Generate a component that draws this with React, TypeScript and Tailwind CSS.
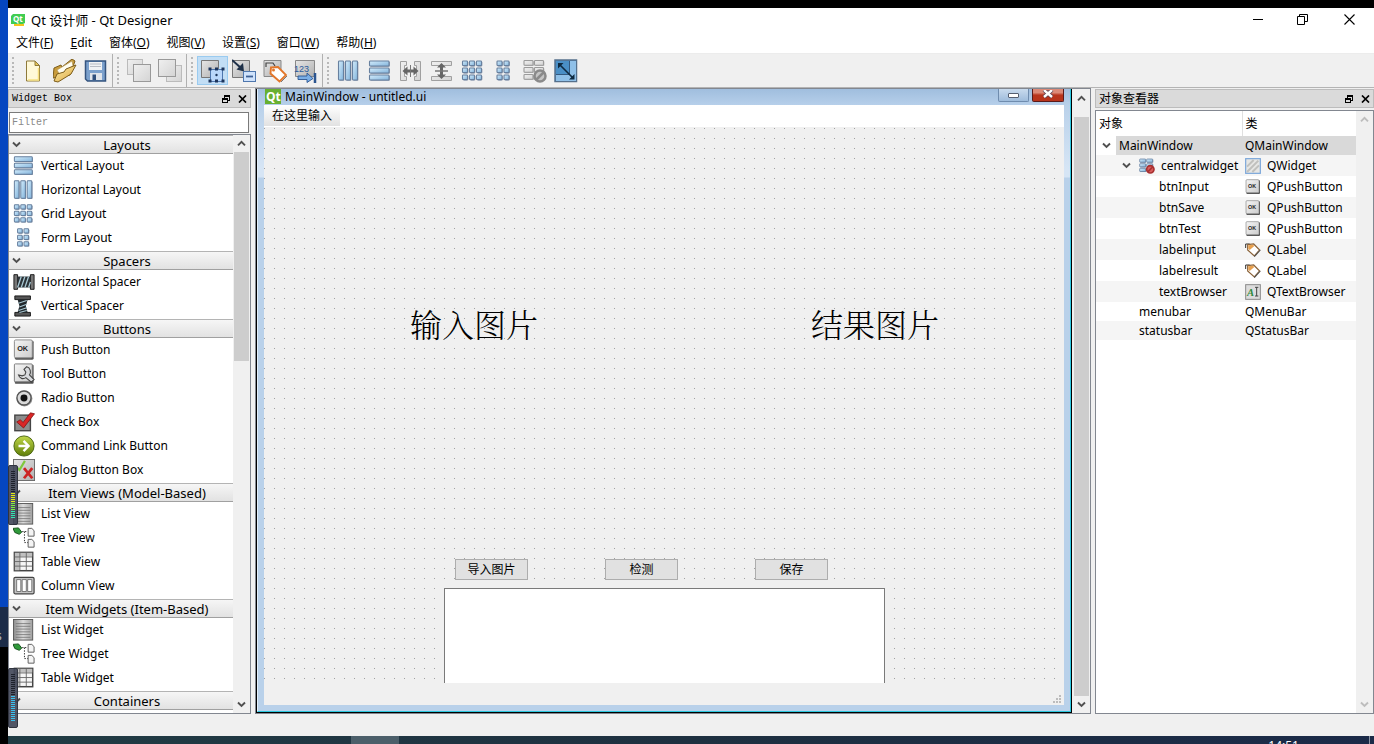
import React from "react";

type IconProps = { size?: number; children: React.ReactNode };

function Icon({ size = 24, children }: IconProps) {
  return (
    <svg width={size} height={size} viewBox="0 0 24 24" aria-hidden="true" className="block shrink-0">
      {children}
    </svg>
  );
}

function Defs() {
  return (
    <svg width="0" height="0" className="absolute" aria-hidden="true">
      <defs>
        <linearGradient id="blue" x1="0" y1="0" x2="1" y2="1">
          <stop offset="0" stopColor="#d3ecfb" />
          <stop offset="1" stopColor="#83b4dc" />
        </linearGradient>
        <linearGradient id="gray" x1="0" y1="0" x2="1" y2="1">
          <stop offset="0" stopColor="#e6e6e6" />
          <stop offset="1" stopColor="#b0b0b0" />
        </linearGradient>
        <linearGradient id="button" x1="0" y1="0" x2="1" y2="1">
          <stop offset="0" stopColor="#f6f6f6" />
          <stop offset="1" stopColor="#cccccc" />
        </linearGradient>
        <linearGradient id="dim" x1="0" y1="0" x2="1" y2="1">
          <stop offset="0" stopColor="#f0f0f0" />
          <stop offset="1" stopColor="#d4d4d4" />
        </linearGradient>
        <linearGradient id="gold" x1="0" y1="0" x2="1" y2="1">
          <stop offset="0" stopColor="#fdf0b0" />
          <stop offset="1" stopColor="#dca53a" />
        </linearGradient>
        <linearGradient id="green" x1="0" y1="0" x2="0" y2="1">
          <stop offset="0" stopColor="#c2d84a" />
          <stop offset="1" stopColor="#5e7d08" />
        </linearGradient>
        <linearGradient id="list" x1="0" y1="0" x2="1" y2="0">
          <stop offset="0" stopColor="#8c8c8c" />
          <stop offset="0.5" stopColor="#dcdcdc" />
          <stop offset="1" stopColor="#a0a0a0" />
        </linearGradient>
      </defs>
    </svg>
  );
}

function Cell({ x, y, w, h, dim }: { x: number; y: number; w: number; h: number; dim?: boolean }) {
  return (
    <g>
      <rect x={x + 0.8} y={y + 0.8} width={w} height={h} rx="0.800" fill={dim ? "#b8b8b8" : "#8592a8"} />
      <rect x={x} y={y} width={w} height={h} rx="0.800" fill={dim ? "url(#dim)" : "url(#blue)"} stroke={dim ? "#9b9b9b" : "#67809f"} strokeWidth="1.100" />
    </g>
  );
}

const HLayout = () => (
  <>
    {[1.5, 8.5, 15.5].map((x) => (
      <Cell key={x} x={x} y={2} w={5} h={19} />
    ))}
  </>
);
const VLayout = () => (
  <>
    {[2, 9, 16].map((y) => (
      <Cell key={y} x={1.5} y={y} w={19.5} h={5} />
    ))}
  </>
);
const GridLayout = () => (
  <>
    {[2, 9, 16].map((y) => [1.5, 8.5, 15.5].map((x) => <Cell key={x + y * 50} x={x} y={y} w={5} h={4.6} />))}
  </>
);
const FormLayout = () => (
  <>
    {[2, 9, 16].map((y) => [5, 12].map((x) => <Cell key={x + y * 50} x={x} y={y} w={5} h={4.6} />))}
  </>
);
const HSplit = () => (
  <>
    <path d="M1.500 2.500h6v4h-2v11h2v4h-6zM21.500 2.500h-6v4h2v11h-2v4h6z" fill="url(#dim)" stroke="#a0a0a0" />
    <path d="M3.500 12l5-4.500v3h6v-3l5 4.500-5 4.500v-3h-6v3z" fill="#666" />
    <path d="M11.500 6v12" stroke="#777" />
  </>
);
const VSplit = () => (
  <>
    <path d="M1.500 2.500h20v4h-20zM1.500 17.500h20v4h-20z" fill="url(#dim)" stroke="#a0a0a0" />
    <path d="M11.500 4l4.500 4.500h-3v7h3L11.500 20l-4.500-4.500h3v-7H7z" fill="#666" />
    <path d="M5 12h13" stroke="#777" strokeWidth="1.500" />
  </>
);
const BreakLayout = ({ color }: { color?: boolean }) => (
  <>
    {[1.5, 8.5, 15.5].map((y) => [1, 11.5].map((x) => <Cell key={x + y * 50} x={x} y={y} w={9} h={4.8} dim={!color} />))}
    <circle cx="17" cy="17" r="5.500" fill={color ? "#d85c5c" : "#c4c4c4"} stroke={color ? "#a83030" : "#8a8a8a"} strokeWidth="2.500" />
    <path d="M13.500 20.500l7-7" stroke={color ? "#a83030" : "#8a8a8a"} strokeWidth="2.500" />
  </>
);
const AdjustSize = () => (
  <>
    <rect x="1" y="1" width="21.500" height="21.500" fill="#4f86b8" stroke="#55708c" strokeWidth="1.500" />
    <path d="M2 2h13v13H2z" fill="#4a8fc6" />
    <path d="M15.500 2H22v20H2v-6.500h13.500z" fill="#8fc0e8" />
    <path d="M2 15.500h13.500V2" fill="none" stroke="#33597f" />
    <path d="M6 6l13 13" stroke="#0f2a40" strokeWidth="1.600" />
    <path d="M4 4h5.500L4 9.500zM20.500 20.500H15l5.500-5.500z" fill="#0f2a40" />
  </>
);
const NewFile = () => (
  <>
    <path d="M4.500 2H13l4.500 4.500V22h-13z" fill="#fff9d8" stroke="#8f7a3a" />
    <path d="M13 2v4.500h4.500z" fill="#e8c95a" stroke="#8f7a3a" />
    <path d="M6 21h10.500V9" fill="none" stroke="#f5df80" strokeWidth="1.500" />
  </>
);
const OpenFile = () => (
  <>
    <path d="M0 19L1 9l7-3 1 2L19 0l3 2-5 14z" fill="#c99c3c" stroke="#7d5d1a" />
    <path d="M4 11L19 2l1 5-13 9z" fill="#fffdf0" stroke="#b49a5a" strokeWidth="0.700" />
    <path d="M1 22l3-7 7-2 2-3 10-4-5 9L5 23z" fill="url(#gold)" stroke="#7d5d1a" />
  </>
);
const SaveFile = () => (
  <>
    <path d="M1.500 2h20v20H3.500l-2-2z" fill="#7ba0cc" stroke="#35547f" strokeWidth="1.500" />
    <path d="M5 3h13v8H5z" fill="#f0f2f4" />
    <path d="M6 5h11M6 7.500h11" stroke="#b8bcc4" />
    <path d="M6 14h12v7H6z" fill="#e0e4ea" />
    <path d="M8.500 15.500h3.500v5.500H8.500z" fill="#2f4f7c" />
  </>
);
const BringFront = () => (
  <>
    <rect x="0.500" y="0.500" width="15" height="15" fill="url(#dim)" stroke="#bbb" />
    <rect x="6.500" y="5.500" width="17" height="17" fill="url(#dim)" stroke="#999" />
  </>
);
const SendBack = () => (
  <>
    <rect x="8.500" y="6.500" width="15" height="16" fill="url(#dim)" stroke="#bbb" />
    <rect x="0.500" y="0.500" width="17" height="17" fill="url(#dim)" stroke="#999" />
  </>
);
const EditWidgets = () => (
  <>
    <path d="M.5 1.500h17v17H.5z" fill="url(#gray)" stroke="#777" />
    <rect x="9.500" y="10.500" width="12" height="12" fill="#b9d7fb" stroke="#4e76ad" />
    {[9, 15.5, 22].map((x) => [10, 22].map((y) => <rect key={x + y * 50} x={x - 1.5} y={y - 1.5} width="3" height="3" fill="#1c355c" />))}
    <circle cx="15.500" cy="16" r="1.200" fill="#1c355c" />
  </>
);
const EditSignals = () => (
  <>
    <path d="M.5 1.500h17v17H.5z" fill="url(#gray)" stroke="#777" />
    <path d="M0 1l9 8" stroke="#1e3048" strokeWidth="2" />
    <path d="M12 12.500l-1-8.500-6.500 6.500z" fill="#1e3048" />
    <rect x="11.500" y="12.500" width="12" height="10" fill="#cfe2fb" stroke="#4e76ad" />
    <path d="M14 17.500h7" stroke="#3c5f94" strokeWidth="1.800" />
  </>
);
const EditBuddies = () => (
  <>
    <path d="M1 1.500h17v16H1z" fill="url(#gray)" stroke="#888" />
    <path d="M3 8V4h7l2 3" fill="none" stroke="#444" strokeWidth="1.200" />
    <path d="M8 8.500l7-.5 8 8-6.500 6.500L7.500 14.500z" fill="#fff" stroke="#e2762a" strokeWidth="1.900" />
    <circle cx="10.500" cy="11" r="1.500" fill="#e2762a" />
    <path d="M18 23l6-6" stroke="#777" />
  </>
);
const EditTabs = () => (
  <>
    <path d="M1.500 1.500h19v16h-19z" fill="url(#gray)" stroke="#888" />
    <text x="0" y="13" fontSize="9" fontFamily="Liberation Sans, sans-serif" fill="#2a5a9c">123</text>
    <path d="M4 17h9v-3l6 5.500-6 4v-3H4z" fill="#79aee6" stroke="#2b5590" strokeWidth="0.900" />
    <path d="M21 14v10" stroke="#2b5590" strokeWidth="2.500" />
  </>
);
const HSpacer = () => (
  <>
    <path d="M1 4h4v16H1zM19 4h4v16h-4z" fill="#777" stroke="#111" />
    <path d="M5 6h14v12H5z" fill="#2c3338" />
    <path d="M5 18l4-12M9 18l4-12M13 18l4-12M17 18l2-6" stroke="#a9c9d4" strokeWidth="1.400" />
  </>
);
const VSpacer = () => (
  <>
    <path d="M2 1h17v4H2zM2 19h17v4H2z" fill="#555" stroke="#111" />
    <path d="M5 5h11l-2 7 2 7H5l2-7z" fill="#22282c" />
    <path d="M6 9l9-3M7 13l8-3M6 17l9-3M7 19l8-2" stroke="#a9c9d4" strokeWidth="1.200" />
  </>
);
const PushIcon = () => (
  <>
    <rect x="2" y="2" width="20.500" height="20.500" rx="1.500" fill="#555" />
    <rect x="1.500" y="1" width="19.500" height="19.500" rx="1.500" fill="url(#button)" stroke="#888" />
    <text x="4.500" y="13" fontSize="8" fontWeight="bold" fontFamily="Liberation Sans, sans-serif" fill="#222">OK</text>
  </>
);
const ToolIcon = () => (
  <>
    <rect x="2" y="2" width="20.500" height="20.500" rx="1" fill="#555" />
    <rect x="1.500" y="1" width="19.500" height="19.500" rx="1" fill="url(#button)" stroke="#777" />
    <path d="M15 4c4 1 5 6 3 9l5 5-3 3-6-5c-3 2-7 1-8-3l4 1 3-1 1-3-2-3z" fill="#d8dadd" stroke="#444" strokeWidth="1.200" />
  </>
);
const RadioIcon = () => (
  <>
    <circle cx="12.500" cy="12.500" r="8.700" fill="#999" />
    <circle cx="12" cy="12" r="7.700" fill="#dadada" stroke="#555" strokeWidth="1.500" />
    <circle cx="12" cy="12" r="3.800" fill="#111" />
  </>
);
const CheckIcon = () => (
  <>
    <rect x="2" y="4.500" width="17" height="17" fill="#8c8c8c" stroke="#444" strokeWidth="1.500" />
    <path d="M4 12l4-2.500 3 3L19 2l4.500 1L11.500 18.500z" fill="#d92626" stroke="#7a0e0e" strokeWidth="0.800" />
  </>
);
const CommandIcon = () => (
  <>
    <circle cx="12" cy="12" r="11" fill="url(#green)" stroke="#45600a" />
    <path d="M6 12h11M11.500 6.500l5.500 5.500-5.500 5.500" fill="none" stroke="#fff" strokeWidth="2.600" />
  </>
);
const DialogIcon = () => (
  <>
    <rect x="0.500" y="0.500" width="23" height="23" fill="url(#gray)" stroke="#666" />
    <path d="M4 9l3 3 6-10" fill="none" stroke="#7fc93c" strokeWidth="2.400" />
    <path d="M12 10l9 11M21 10l-9 11" stroke="#cc2222" strokeWidth="3" />
  </>
);
const ListIcon = () => (
  <>
    <rect x="0.500" y="0.500" width="21" height="22.500" fill="url(#list)" stroke="#555" />
    <path d="M3 5h16M3 8h16M3 11h16M3 14h16M3 17h16M3 20h16" stroke="#777" strokeWidth="0.900" />
  </>
);
const TreeIcon = () => (
  <>
    <path d="M0 1.500l6-.5 3.500 4.500L7 8 2 6z" fill="#2f9a3a" stroke="#124d18" />
    <path d="M10 5h5M12.500 5v12h4" fill="none" stroke="#222" strokeDasharray="1.500 1.500" />
    <path d="M16.500 1.500h4l2.500 2.500v6h-6.500zM16.500 13.500h4l2.500 2.500v6h-6.500z" fill="#f4f4f4" stroke="#555" />
  </>
);
const TableIcon = () => (
  <>
    <rect x="1.500" y="1.500" width="20" height="20" fill="#f6f6f6" stroke="#444" strokeWidth="1.600" />
    <path d="M2 2h5v19H2zM2 2h19v4H2z" fill="#c0c0c0" />
    <path d="M7.500 2v19M14.500 2v19M2 6.500h19M2 11.500h19M2 16.500h19" stroke="#666" />
  </>
);
const ColumnIcon = () => (
  <>
    <rect x="1" y="2.500" width="22" height="18" rx="1.500" fill="#c4c4c4" stroke="#444" strokeWidth="1.300" />
    <path d="M4 5h4.500v13H4zM10 5h4.500v13H10zM16 5h4.500v13H16z" fill="#fff" stroke="#555" strokeWidth="0.800" />
  </>
);
const WidgetIcon = () => (
  <>
    <rect x="1" y="1" width="22" height="22" fill="#e6e6e4" stroke="#7ba7da" strokeWidth="1.800" />
    <path d="M3 13L13 3M3 21L20 4M11 21l10-10" stroke="#c0c0bd" strokeWidth="3" />
  </>
);
const LabelIcon = () => (
  <>
    <path d="M1 9V3h6" fill="none" stroke="#333" strokeWidth="1.500" />
    <path d="M4 4l9-1 9 9-8 9L4 12z" fill="#fff" stroke="#8a6238" strokeWidth="1.800" />
    <path d="M5 5l7-1 2 2-7 6-2-2z" fill="#e8a04e" />
    <path d="M14 22l9-10" stroke="#555" strokeWidth="1.600" />
  </>
);
const TextIcon = () => (
  <>
    <rect x="1" y="1" width="22" height="22" fill="#dcdcdc" stroke="#8a8a8a" strokeWidth="1.500" />
    <text x="3" y="18" fontSize="16" fontStyle="italic" fontWeight="bold" fontFamily="Liberation Serif, serif" fill="#2f8a3c">A</text>
    <path d="M15 5h5M15 18h5M17.500 5v13" stroke="#444" strokeWidth="1.500" />
  </>
);

function Chevron({ up, faint }: { up?: boolean; faint?: boolean }) {
  return (
    <svg width="9" height="7" viewBox="0 0 9 7" aria-hidden="true" className="block shrink-0">
      <path d={up ? "M1 5.300L4.500 1.800 8 5.300" : "M1 1.500L4.500 5 8 1.500"} fill="none" stroke={faint ? "#bdbdbd" : "#505050"} strokeWidth="1.900" />
    </svg>
  );
}

function ScrollBar({ thumb, faint }: { thumb?: string; faint?: boolean }) {
  return (
    <div className="flex w-[17px] shrink-0 flex-col items-center bg-[#f0f0f0]">
      <button type="button" aria-label="Scroll up" className="flex h-[17px] w-full shrink-0 items-center justify-center">
        <Chevron up faint={faint} />
      </button>
      <div className="w-full flex-1 px-px">{thumb && <div className={"w-full bg-[#cdcdcd] " + thumb} />}</div>
      <button type="button" aria-label="Scroll down" className="flex h-[17px] w-full shrink-0 items-center justify-center">
        <Chevron faint={faint} />
      </button>
    </div>
  );
}

function DockTitle({ children }: { children: React.ReactNode }) {
  return (
    <div className="flex h-[19px] items-center justify-between border border-[#bcbcbc] bg-[#dadada] px-[3px]">
      {children}
      <div className="flex items-center gap-2">
        <button type="button" aria-label="Float">
          <svg width="8" height="8" viewBox="0 0 8 8" className="block" shapeRendering="crispEdges">
            <path d="M2 0h6v6H6v2H0V3h2zM3 2v1h3v2h1V2zM1 5v2h4V5z" fill="#000" fillRule="evenodd" />
          </svg>
        </button>
        <button type="button" aria-label="Close">
          <svg width="9" height="8" viewBox="0 0 9 8" className="block">
            <path d="M1 .5l7 7M8 .5l-7 7" stroke="#000" strokeWidth="1.700" />
          </svg>
        </button>
      </div>
    </div>
  );
}

const menus = [
  ["文件", "F"],
  ["", "E"],
  ["窗体", "O"],
  ["视图", "V"],
  ["设置", "S"],
  ["窗口", "W"],
  ["帮助", "H"],
];

type Tool = { name: string; icon: React.ReactNode; on?: boolean };
const toolGroups: Tool[][] = [
  [
    { name: "New", icon: <NewFile /> },
    { name: "Open", icon: <OpenFile /> },
    { name: "Save", icon: <SaveFile /> },
  ],
  [
    { name: "Bring to front", icon: <BringFront /> },
    { name: "Send to back", icon: <SendBack /> },
  ],
  [
    { name: "Edit widgets", icon: <EditWidgets />, on: true },
    { name: "Edit signals", icon: <EditSignals /> },
    { name: "Edit buddies", icon: <EditBuddies /> },
    { name: "Edit tab order", icon: <EditTabs /> },
  ],
  [
    { name: "Lay out horizontally", icon: <HLayout /> },
    { name: "Lay out vertically", icon: <VLayout /> },
    { name: "Horizontal splitter", icon: <HSplit /> },
    { name: "Vertical splitter", icon: <VSplit /> },
    { name: "Lay out in a grid", icon: <GridLayout /> },
    { name: "Lay out in a form", icon: <FormLayout /> },
    { name: "Break layout", icon: <BreakLayout /> },
    { name: "Adjust size", icon: <AdjustSize /> },
  ],
];

const sections: { title: string; items: [string, React.ReactNode][] }[] = [
  {
    title: "Layouts",
    items: [
      ["Vertical Layout", <VLayout />],
      ["Horizontal Layout", <HLayout />],
      ["Grid Layout", <GridLayout />],
      ["Form Layout", <FormLayout />],
    ],
  },
  {
    title: "Spacers",
    items: [
      ["Horizontal Spacer", <HSpacer />],
      ["Vertical Spacer", <VSpacer />],
    ],
  },
  {
    title: "Buttons",
    items: [
      ["Push Button", <PushIcon />],
      ["Tool Button", <ToolIcon />],
      ["Radio Button", <RadioIcon />],
      ["Check Box", <CheckIcon />],
      ["Command Link Button", <CommandIcon />],
      ["Dialog Button Box", <DialogIcon />],
    ],
  },
  {
    title: "Item Views (Model-Based)",
    items: [
      ["List View", <ListIcon />],
      ["Tree View", <TreeIcon />],
      ["Table View", <TableIcon />],
      ["Column View", <ColumnIcon />],
    ],
  },
  {
    title: "Item Widgets (Item-Based)",
    items: [
      ["List Widget", <ListIcon />],
      ["Tree Widget", <TreeIcon />],
      ["Table Widget", <TableIcon />],
    ],
  },
  { title: "Containers", items: [] },
];

const children: [string, string, React.ReactNode][] = [
  ["btnInput", "QPushButton", <PushIcon />],
  ["btnSave", "QPushButton", <PushIcon />],
  ["btnTest", "QPushButton", <PushIcon />],
  ["labelinput", "QLabel", <LabelIcon />],
  ["labelresult", "QLabel", <LabelIcon />],
  ["textBrowser", "QTextBrowser", <TextIcon />],
];

function TitleBar() {
  return (
    <div className="flex h-[23px] items-center bg-white pl-[3px]">
      <svg width="15" height="14" viewBox="0 0 15 14" className="shrink-0" aria-hidden="true">
        <path d="M2 1h12v9l-2 1H0V3z" fill="#41cd52" />
        <path d="M3 11h10v2H3z" fill="#f3c41b" />
        <text x="2" y="9" fontSize="8" fontWeight="bold" fontFamily="Open Sans, sans-serif" fill="#fff">Qt</text>
      </svg>
      <h1 className="ml-[5px] flex-1 text-[13px] leading-4">Qt 设计师 - Qt Designer</h1>
      <div className="flex">
        <button type="button" aria-label="Minimize" className="flex h-5 w-[45px] items-center justify-center">
          <svg width="10" height="10" viewBox="0 0 10 10"><path d="M0 4.500h10" stroke="#000" /></svg>
        </button>
        <button type="button" aria-label="Restore" className="flex h-5 w-[45px] items-center justify-center">
          <svg width="11" height="11" viewBox="0 0 11 11"><path d="M.5 2.500h7v8h-7zM2.500 2.500v-2h8v7h-3" fill="none" stroke="#000" /></svg>
        </button>
        <button type="button" aria-label="Close window" className="flex h-5 w-[49px] items-center justify-center">
          <svg width="11" height="11" viewBox="0 0 11 11"><path d="M.5.5l10 10M10.500.5l-10 10" stroke="#000" strokeWidth="1.100" /></svg>
        </button>
      </div>
    </div>
  );
}

function MenuBar() {
  return (
    <nav className="flex h-[23px] items-center gap-[17px] border-b border-[#ececec] bg-white pt-[2px] pl-2">
      {menus.map(([label, key]) => (
        <button key={key} type="button" className="whitespace-nowrap">
          {label ? (
            <>
              {label}(<u>{key}</u>)
            </>
          ) : (
            <>
              <u>E</u>dit
            </>
          )}
        </button>
      ))}
    </nav>
  );
}

function ToolBar() {
  return (
    <div className="flex h-[34px] border-b border-[#b4b4b4] bg-[#f0f0f0]">
      {toolGroups.map((group, i) => (
        <div key={i} className={"flex items-center pr-px " + (i < 3 ? "border-r border-[#b0b0b0]" : "")}>
          <div className="flex w-[10px] justify-center">
            <div className="h-[27px] w-0 border-l-2 border-dotted border-[#b8b8b8]" />
          </div>
          {group.map((t) => (
            <button
              key={t.name}
              type="button"
              aria-label={t.name}
              className={"flex h-[29px] w-[31px] items-center justify-center " + (t.on ? "border border-[#9acbf0] bg-[#c2def5]" : "")}
            >
              <Icon>{t.icon}</Icon>
            </button>
          ))}
        </div>
      ))}
    </div>
  );
}

function WidgetBox() {
  return (
    <aside className="flex w-[243px] shrink-0 flex-col pt-px">
      <DockTitle>
        <h2 className="font-[Liberation_Mono,monospace] text-[10px] leading-4">Widget Box</h2>
      </DockTitle>
      <div className="pt-[4px] pr-[2px] pb-[1px] pl-px">
        <input
          type="text"
          aria-label="Filter"
          placeholder="Filter"
          className="block h-[21px] w-full border border-[#7a7a7a] bg-white px-[2px] font-[Liberation_Mono,monospace] text-[10px] placeholder-[#8a8a8a] outline-none"
        />
      </div>
      <div className="flex min-h-0 flex-1 border border-[#828790] bg-white">
        <div className="min-w-0 flex-1 overflow-hidden">
          {sections.map((s) => (
            <section key={s.title}>
              <button
                type="button"
                className="flex h-[19px] w-full items-center border-y border-t-[#b4b4b4] border-b-[#a0a0a0] bg-gradient-to-b from-[#f6f6f6] to-[#e2e2e2] pl-[3px]"
              >
                <Chevron />
                <span className="flex-1 text-center text-[13px] leading-4">{s.title}</span>
              </button>
              <ul className="pb-px">
                {s.items.map(([name, icon]) => (
                  <li key={name} className="flex h-6 items-center gap-[6px] pl-1">
                    <Icon size={22}>{icon}</Icon>
                    {name}
                  </li>
                ))}
              </ul>
            </section>
          ))}
        </div>
        <ScrollBar thumb="h-[209px]" />
      </div>
    </aside>
  );
}

function FormCanvas() {
  const button = "absolute top-[432px] h-[21px] w-[73px] border border-[#adadad] bg-[#e1e1e1]";
  const label = "absolute top-[180px] font-[Noto_Serif_CJK_SC,Noto_Sans_CJK_SC,sans-serif] text-[32px] leading-8 font-light";
  return (
    <div className="relative min-h-0 flex-1 overflow-hidden bg-[conic-gradient(from_270deg_at_1px_1px,#a0a0a0_90deg,transparent_0)] bg-size-[10px_10px] bg-position-[0_1px]">
      <div className={label + " left-[146px]"}>输入图片</div>
      <div className={label + " left-[547px]"}>结果图片</div>
      <button type="button" className={button + " left-[191px]"}>导入图片</button>
      <button type="button" className={button + " left-[341px]"}>检测</button>
      <button type="button" className={button + " left-[491px]"}>保存</button>
      <textarea aria-label="textBrowser" className="absolute top-[461px] left-[180px] h-[192px] w-[441px] resize-none border border-[#7a7a7a] bg-white outline-none" />
    </div>
  );
}

function FormWindow() {
  return (
    <main className="ml-1 flex min-w-0 flex-1 border border-[#828790] bg-[#f0f0f0]">
      <div className="flex min-w-0 flex-1 flex-col border-x border-b border-black">
        <div className="flex min-h-0 flex-1 flex-col border-r border-b border-l border-[#2cc8e0] border-l-[#e3effa] bg-[linear-gradient(#a3c0e0,#b9d1ea_16px,#d6e5f5_80px,#d6e5f5_88px,#b9d1ea_89px)] px-[6px] pb-[6px]">
          <div className="flex h-4 shrink-0 items-start bg-gradient-to-b from-[#a0bede] to-[#b6cfea]">
            <div className="flex h-4 flex-1 items-center gap-1 pl-px">
              <svg width="16" height="16" viewBox="0 0 16 16" aria-hidden="true">
                <rect width="16" height="15" fill="#68b030" />
                <text x="1" y="12" fontSize="12" fontWeight="bold" fontFamily="Open Sans, sans-serif" fill="#fff">Qt</text>
              </svg>
              <span className="whitespace-nowrap">MainWindow - untitled.ui</span>
            </div>
            <div className="flex gap-[3px]">
              <button type="button" aria-label="Minimize form" className="flex h-[13px] w-[31px] items-center justify-center rounded-b-[2px] border border-t-0 border-[#6f8cae] bg-gradient-to-b from-[#c9dbee] to-[#9fbcdc]">
                <span className="h-[5px] w-[11px] rounded-[1px] border border-[#555f70] bg-white" />
              </button>
              <button type="button" aria-label="Close form" className="flex h-[13px] w-8 items-center justify-center rounded-b-[2px] border border-t-0 border-[#5a1b1b] bg-gradient-to-b from-[#dc8a78] from-30% to-[#b8341c] to-50%">
                <svg width="12" height="10" viewBox="0 0 12 10">
                  <path d="M2 0l8 7M10 0L2 7" stroke="#5a4050" strokeWidth="4" />
                  <path d="M2 0l8 7M10 0L2 7" stroke="#fff" strokeWidth="2.400" />
                </svg>
              </button>
            </div>
          </div>
          <div className="flex h-[22px] shrink-0 items-start bg-white">
            <button type="button" className="h-[21px] bg-gradient-to-b from-white to-[#e2e2e2] px-2 pt-px">在这里输入</button>
          </div>
          <div className="flex min-h-0 flex-1 flex-col bg-[#f0f0f0]">
            <FormCanvas />
            <div className="flex h-[22px] shrink-0 items-end justify-end pr-[3px] pb-[2px]">
              <svg width="8" height="8" viewBox="0 0 8 8" fill="#bcbcbc" aria-hidden="true">
                <path d="M6 0h2v2H6zM3 3h2v2H3zM6 3h2v2H6zM0 6h2v2H0zM3 6h2v2H3zM6 6h2v2H6z" />
              </svg>
            </div>
          </div>
        </div>
      </div>
      <div className="ml-px flex w-[17px] flex-col items-center">
        <button type="button" aria-label="Scroll up" className="flex h-7 w-full items-start justify-center pt-[6px]">
          <Chevron up />
        </button>
        <div className="w-full flex-1 px-px">
          <div className="h-full bg-[#cdcdcd]" />
        </div>
        <button type="button" aria-label="Scroll down" className="flex h-[17px] w-full items-center justify-center">
          <Chevron />
        </button>
      </div>
    </main>
  );
}

function ObjectInspector() {
  return (
    <aside className="ml-1 flex w-[279px] shrink-0 flex-col pt-px">
      <DockTitle>
        <h2 className="leading-4">对象查看器</h2>
      </DockTitle>
      <div className="mt-[2px] flex min-h-0 flex-1 border border-[#828790] bg-white">
        <div className="min-w-0 flex-1 overflow-hidden">
          <table className="w-full table-fixed border-collapse text-left leading-4">
            <thead>
              <tr className="h-[25px]">
                <th className="w-[146px] border-r border-[#e0e0e0] p-0 pl-[3px] font-normal">对象</th>
                <th className="p-0 pl-[3px] font-normal">类</th>
              </tr>
            </thead>
            <tbody className="whitespace-nowrap">
              <tr className="h-[19px]">
                <td className="p-0">
                  <div className="flex h-[19px] items-center">
                    <button type="button" aria-label="Collapse MainWindow" className="flex w-5 shrink-0 justify-center">
                      <Chevron />
                    </button>
                    <span className="flex h-full flex-1 items-center bg-[#d9d9d9] pl-[3px]">MainWindow</span>
                  </div>
                </td>
                <td className="p-0">
                  <span className="flex h-[19px] items-center bg-[#d9d9d9] pl-[3px]">QMainWindow</span>
                </td>
              </tr>
              <tr className="h-[21px] bg-[#f5f5f5]">
                <td className="p-0">
                  <div className="flex items-center">
                    <button type="button" aria-label="Collapse centralwidget" className="ml-5 flex w-5 shrink-0 justify-center">
                      <Chevron />
                    </button>
                    <span className="ml-[3px] flex items-center gap-[6px]">
                      <Icon size={16}>
                        <BreakLayout color />
                      </Icon>
                      centralwidget
                    </span>
                  </div>
                </td>
                <td className="p-0 pl-[3px]">
                  <div className="flex items-center gap-[6px]">
                    <Icon size={16}>
                      <WidgetIcon />
                    </Icon>
                    QWidget
                  </div>
                </td>
              </tr>
              {children.map(([name, cls, icon]) => (
                <tr key={name} className="h-[21px] even:bg-[#f5f5f5]">
                  <td className="p-0 pl-[63px]">{name}</td>
                  <td className="p-0 pl-[3px]">
                    <div className="flex items-center gap-[6px]">
                      <Icon size={16}>{icon}</Icon>
                      {cls}
                    </div>
                  </td>
                </tr>
              ))}
              <tr className="h-[19px]">
                <td className="p-0 pl-[43px]">menubar</td>
                <td className="p-0 pl-[3px]">QMenuBar</td>
              </tr>
              <tr className="h-[19px] bg-[#f5f5f5]">
                <td className="p-0 pl-[43px]">statusbar</td>
                <td className="p-0 pl-[3px]">QStatusBar</td>
              </tr>
            </tbody>
          </table>
        </div>
        <ScrollBar faint />
      </div>
    </aside>
  );
}

function Meter({ place, level }: { place: string; level: string }) {
  return (
    <div className={"absolute left-2 h-[60px] w-[10px] rounded-[2px] border border-[#30343f] bg-[#3f4557]/90 px-[2px] py-[5px] " + place}>
      <svg width="4" height="48" viewBox="0 0 4 48" className="block" shapeRendering="crispEdges" aria-hidden="true">
        {Array.from({ length: 24 }, (_, i) => (
          <rect key={i} y={i * 2} width="4" height="1" fill={i < 11 ? "#1d212b" : level === "blue" ? "#3ac0ee" : i < 16 ? "#e2ea10" : i < 20 ? "#7cf040" : "#30e8b0"} />
        ))}
      </svg>
    </div>
  );
}

export default function App() {
  return (
    <div className="relative flex h-screen w-full overflow-hidden bg-[#f0f0f0] font-['Noto_Sans','Noto_Sans_CJK_SC',sans-serif] text-[12px] leading-4 text-black">
      <Defs />
      <div className="flex w-2 shrink-0 flex-col overflow-hidden bg-[#0546c0]">
        <div className="flex-1" />
        <div className="flex h-10 items-center bg-[#1c2c48]">
          <span className="-ml-1 pt-[18px] text-white/70">s</span>
        </div>
        <div className="h-[97px] bg-black" />
      </div>
      <div className="flex min-w-0 flex-1 flex-col">
        <div className="h-2 shrink-0 bg-black" />
        <TitleBar />
        <MenuBar />
        <ToolBar />
        <div className="flex min-h-0 flex-1">
          <WidgetBox />
          <FormWindow />
          <ObjectInspector />
        </div>
        <div className="h-[22px] shrink-0" />
        <footer className="flex h-2 shrink-0 overflow-hidden bg-gradient-to-r from-[#213c44] via-[#1e3040] to-[#1b2a48]">
          <div className="ml-[343px] h-full w-12 bg-[#4c5f6a]" />
          <time className="mt-[2px] mr-[70px] ml-auto text-white">14:51</time>
          <div className="mr-1 h-full w-px bg-[#8a94a4]" />
        </footer>
      </div>
      <Meter place="top-[465px]" level="green" />
      <Meter place="top-[668px]" level="blue" />
    </div>
  );
}
